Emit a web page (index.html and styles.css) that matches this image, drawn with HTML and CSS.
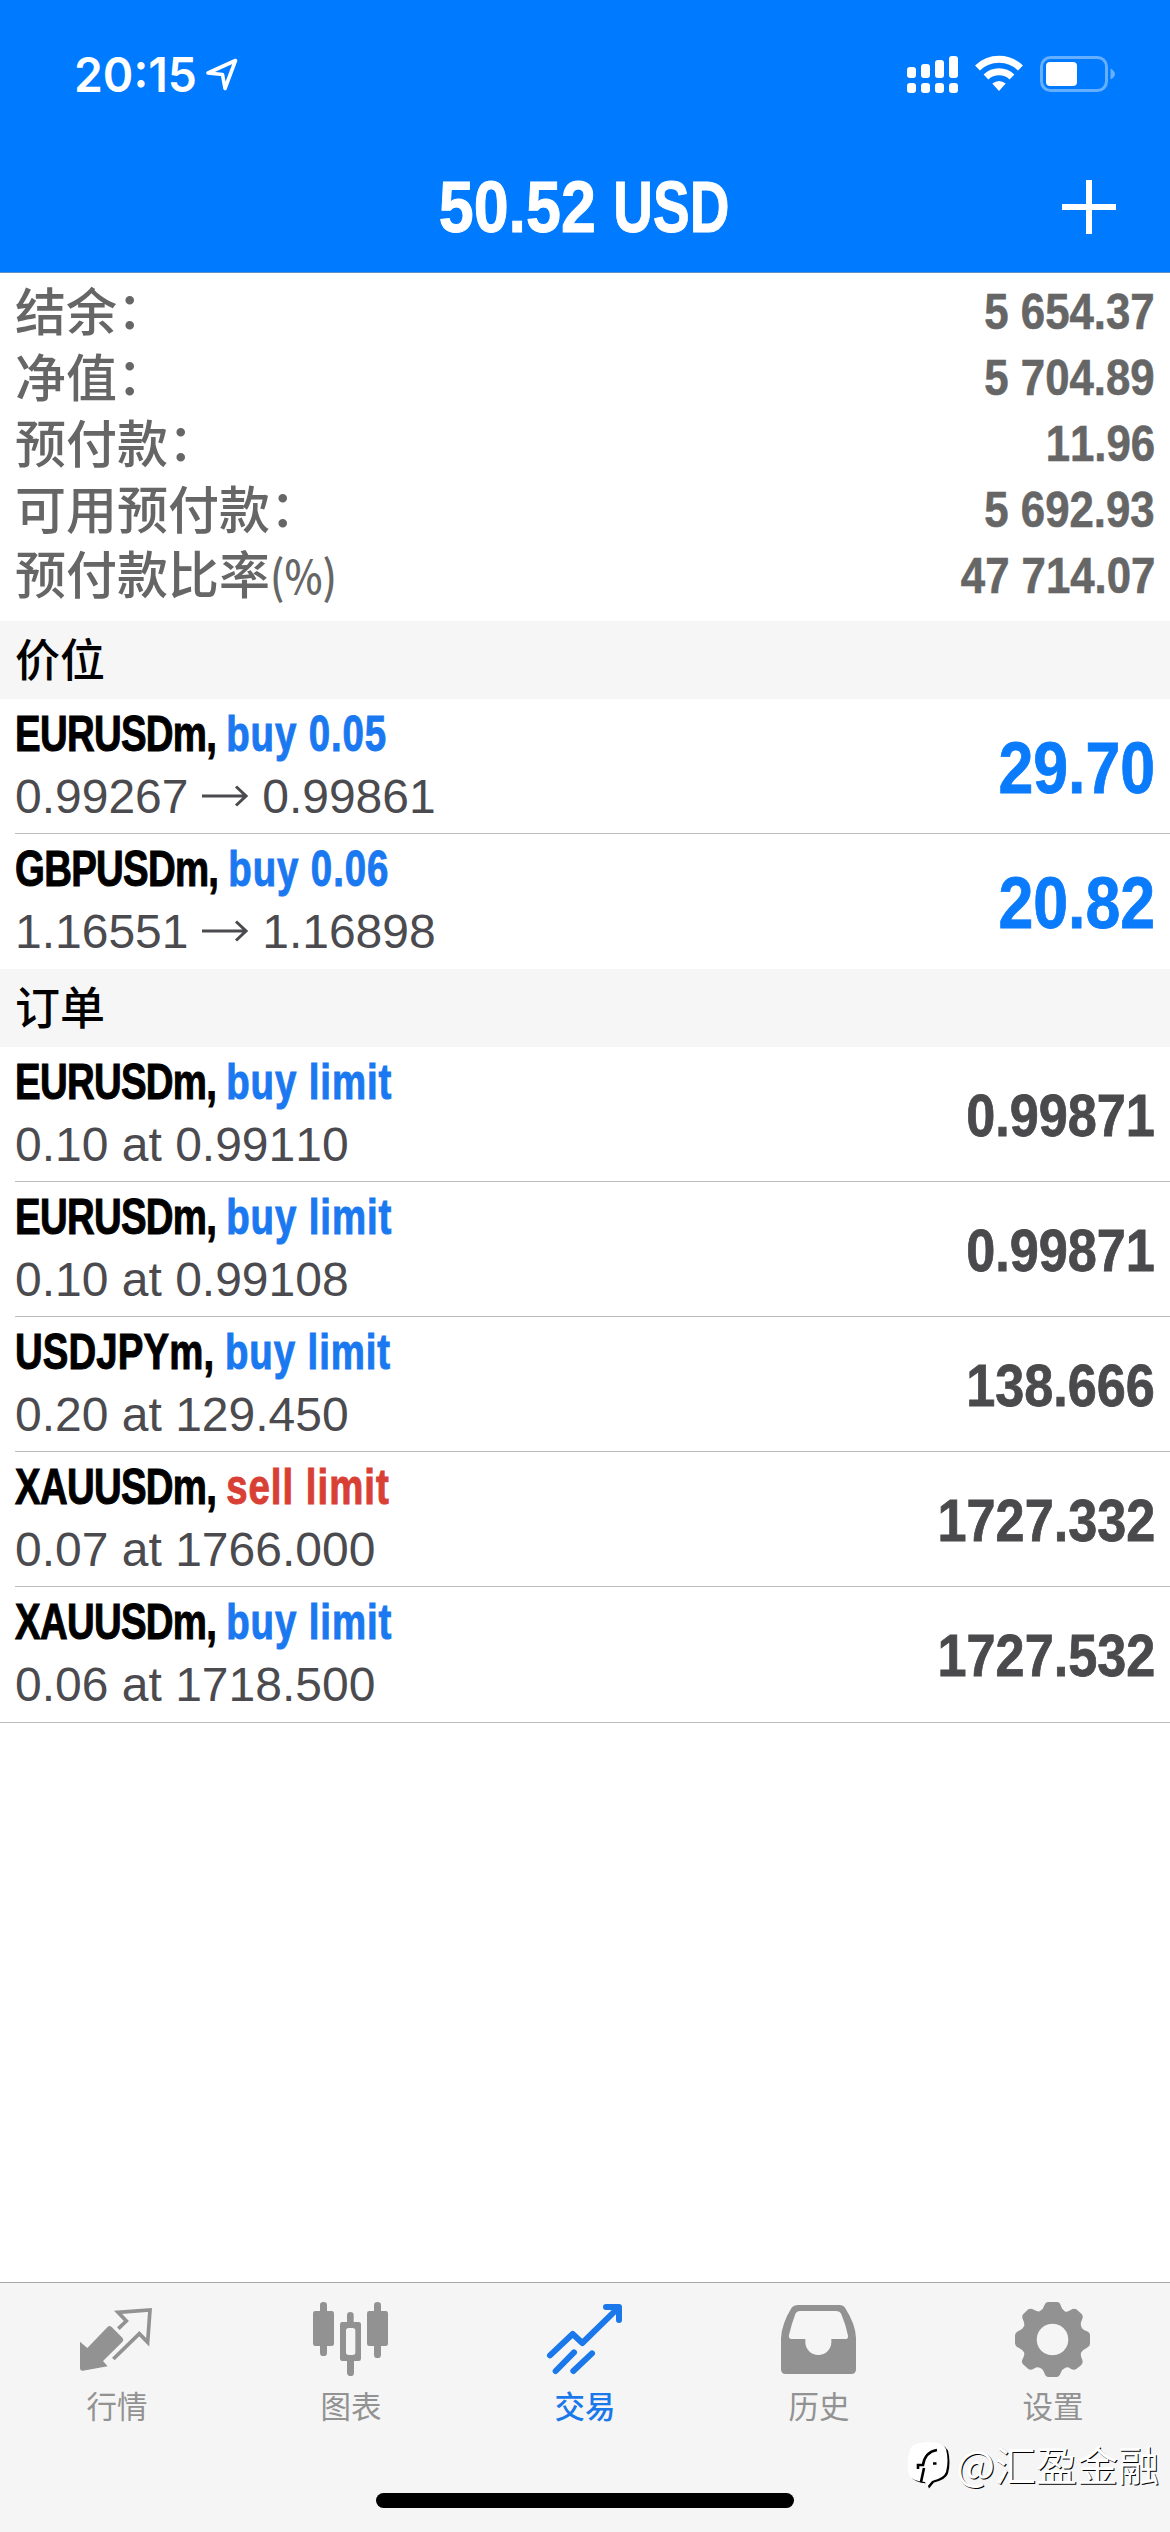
FILE: index.html
```html
<!DOCTYPE html>
<html lang="zh-CN">
<head>
<meta charset="utf-8">
<title>交易</title>
<link rel="stylesheet" href="styles.css">
</head>
<body>
<div class="app">
  <header class="header">
    <div class="status">
      <div class="status-left">
        <span class="clock">20:15</span>
        <svg class="location" width="36" height="36" viewBox="0 0 36 36"><path d="M5 17 32.500 4.500 22 32.500 19.500 18.500Z" fill="none" stroke="#fff" stroke-width="3.600" stroke-linejoin="round"/></svg>
      </div>
      <svg class="status-icons" width="210" height="40" viewBox="906 54 210 40" fill="#fff">
        <rect x="907" y="67" width="9" height="11" rx="3"/><rect x="921" y="64" width="9" height="14" rx="3"/><rect x="935" y="60" width="9" height="18" rx="3"/><rect x="949" y="56" width="9" height="22" rx="3"/>
        <rect x="907" y="83" width="9" height="10" rx="3"/><rect x="921" y="83" width="9" height="10" rx="3"/><rect x="935" y="83" width="9" height="10" rx="3"/><rect x="949" y="83" width="9" height="10" rx="3"/>
        <g fill="none" stroke="#fff" stroke-width="7"><path d="M977.500 68A31 31 0 0 1 1020.500 68"/><path d="M986 77A19 19 0 0 1 1012 77"/></g>
        <path d="M992.300 83.500Q999 78.500 1005.700 83.500L999 91Z"/>
        <rect x="1041.500" y="57.500" width="65" height="33" rx="9" fill="none" stroke="#66afff" stroke-width="3"/>
        <path d="M1110.500 68.500Q1115 71 1115 74T1110.500 79.500Z" fill="#66afff"/>
        <rect x="1046" y="62" width="31" height="24" rx="4"/>
      </svg>
    </div>
    <div class="nav">
      <h1 class="nav-title"><span class="narrow">50.52 <span class="currency">USD</span></span></h1>
      <svg class="add" width="54" height="54" viewBox="0 0 54 54"><path d="M27 0V54M0 27H54" stroke="#fff" stroke-width="6"/></svg>
    </div>
  </header>

  <main class="content">
    <dl class="summary">
      <div class="summary-row"><dt>结余<span class="colon">：</span></dt><dd>5 654.37</dd></div>
      <div class="summary-row"><dt>净值<span class="colon">：</span></dt><dd>5 704.89</dd></div>
      <div class="summary-row"><dt>预付款<span class="colon">：</span></dt><dd>11.96</dd></div>
      <div class="summary-row"><dt>可用预付款<span class="colon">：</span></dt><dd>5 692.93</dd></div>
      <div class="summary-row"><dt>预付款比率<span class="unit">(%)</span></dt><dd>47 714.07</dd></div>
    </dl>

    <h2 class="section">价位</h2>
    <ul class="list">
      <li class="row"><div class="info"><div class="symbol"><span class="name">EURUSDm, </span><span class="buy">buy 0.05</span></div><div class="detail">0.99267 <svg class="arrow" width="46" height="22" viewBox="0 0 46 22"><path d="M0 11H44M34 1.500 44 11 34 20.500"/></svg> 0.99861</div></div><div class="profit">29.70</div></li>
      <li class="row"><div class="info"><div class="symbol"><span class="name">GBPUSDm, </span><span class="buy">buy 0.06</span></div><div class="detail">1.16551 <svg class="arrow" width="46" height="22" viewBox="0 0 46 22"><path d="M0 11H44M34 1.500 44 11 34 20.500"/></svg> 1.16898</div></div><div class="profit">20.82</div></li>
    </ul>

    <h2 class="section">订单</h2>
    <ul class="list orders">
      <li class="row"><div class="info"><div class="symbol"><span class="name">EURUSDm, </span><span class="buy">buy limit</span></div><div class="detail">0.10 at 0.99110</div></div><div class="price">0.99871</div></li>
      <li class="row"><div class="info"><div class="symbol"><span class="name">EURUSDm, </span><span class="buy">buy limit</span></div><div class="detail">0.10 at 0.99108</div></div><div class="price">0.99871</div></li>
      <li class="row"><div class="info"><div class="symbol"><span class="name loose">USDJPYm, </span><span class="buy">buy limit</span></div><div class="detail">0.20 at 129.450</div></div><div class="price">138.666</div></li>
      <li class="row"><div class="info"><div class="symbol"><span class="name">XAUUSDm, </span><span class="sell">sell limit</span></div><div class="detail">0.07 at 1766.000</div></div><div class="price">1727.332</div></li>
      <li class="row"><div class="info"><div class="symbol"><span class="name">XAUUSDm, </span><span class="buy">buy limit</span></div><div class="detail">0.06 at 1718.500</div></div><div class="price">1727.532</div></li>
    </ul>
  </main>

  <footer class="footer">
    <nav class="tabs">
      <a class="tab"><svg class="tab-icon" viewBox="231 120 240 240"><path fill="currentColor" d="M240 245 262 264 322 202Q328 195 335 201L367 233Q373 240 366 247L309 303 323 319 248 332Q240 333 240 325Z"/><path fill="none" stroke="currentColor" stroke-width="11" d="M355 206 379 183 354 157 450 150 443 247 418 221 340 297"/></svg><span>行情</span></a>
      <a class="tab"><svg class="tab-icon" viewBox="933 120 240 240" fill="currentColor"><rect x="939" y="153" width="63" height="105" rx="7"/><rect x="960" y="126" width="21" height="162" rx="10"/><rect x="1101" y="153" width="63" height="105" rx="7"/><rect x="1122" y="126" width="21" height="168" rx="10"/><path fill-rule="evenodd" d="M1041 186V166Q1041 156 1051 156T1061 166V186H1076Q1083 186 1083 193V296Q1083 303 1076 303H1062V338Q1062 348 1052 348T1041 338V303H1027Q1020 303 1020 296V193Q1020 186 1027 186ZM1046 204Q1038 204 1038 212V277Q1038 285 1046 285H1058Q1066 285 1066 277V212Q1066 204 1058 204Z"/></svg><span>图表</span></a>
      <a class="tab active"><svg class="tab-icon" viewBox="315 120 240 240" fill="none" stroke="currentColor" stroke-width="18" stroke-linecap="round" stroke-linejoin="round"><path d="M330 286 398 222 427 249 530 148M498 141H537V180M347 333 402 277M400 333 456 280"/></svg><span>交易</span></a>
      <a class="tab"><svg class="tab-icon" viewBox="117 120 240 240" fill="currentColor"><path fill-rule="evenodd" d="M175 135H298Q310 135 316 145Q347 194 348 234V328Q348 342 334 342H137Q123 342 123 328V234Q126 190 154 145Q161 135 175 135ZM180 153Q170 153 166 162Q155 191 147 225Q145 237 155 237H196V246A39 39 0 0 0 274 246V237H316Q325 237 324 227Q318 196 304 163Q299 153 288 153Z"/></svg><span>历史</span></a>
      <a class="tab"><svg class="tab-icon" viewBox="819 120 240 240" fill="currentColor"><path fill-rule="evenodd" d="M925 126H951Q960 126 963 139Q966 150 976 155Q982 157 993 149Q1002 144 1009 148L1025 162Q1031 169 1026 179Q1020 190 1024 200Q1027 209 1039 213Q1050 217 1050 225V252Q1050 259 1040 264Q1028 269 1024 277Q1020 284 1026 297Q1031 309 1023 316L1009 327Q1002 332 992 326Q984 320 976 323Q966 327 962 339Q958 351 950 351H925Q917 351 913 339Q909 326 899 323Q892 320 881 326Q872 332 865 327L849 313Q843 306 848 297Q855 284 852 277Q848 269 837 264Q825 259 825 250V226Q825 217 837 212Q849 207 852 199Q855 191 849 179Q844 168 850 162L865 148Q872 144 882 149Q892 156 899 154Q909 150 912 139Q916 126 925 126ZM937.500 191A47.500 47.500 0 1 0 937.600 191Z"/></svg><span>设置</span></a>
    </nav>
    <div class="home-indicator"></div>
    <div class="watermark">
      <svg width="46" height="50" viewBox="0 0 46 50"><path transform="translate(2 1.500)" d="M3 9Q4 2 21 1Q36 1 39 8Q42 20 39 31Q37 37 25 40L20 46 18 41Q5 40 2 34Q-1 21 3 9Z" fill="#000"/><path d="M3 9Q4 2 21 1Q36 1 39 8Q42 20 39 31Q37 37 25 40L20 46 18 41Q5 40 2 34Q-1 21 3 9Z" fill="#fff"/><path d="M14 41 17 27M11 28V24H16Q18 11 30 9M26 22.500H29.500" fill="none" stroke="#000" stroke-width="2.600"/></svg>
      <span>@汇盈金融</span>
    </div>
  </footer>
</div>
</body>
</html>
```
FILE: styles.css
```css
* { box-sizing: border-box; }

body {
  margin: 0;
  background: #fff;
  font-family: "Liberation Sans", "Noto Sans CJK SC", sans-serif;
  font-kerning: none;
}

h1, h2, dl, dd, ul { margin: 0; padding: 0; }
ul { list-style: none; }
svg { display: block; }

.app {
  width: 1170px;
  height: 2532px;
  display: flex;
  flex-direction: column;
}

.header {
  height: 273px;
  background: #007aff;
  border-bottom: 1px solid #5f8fc4;
  color: #fff;
}

.status {
  height: 148px;
  padding: 0 54px 0 74px;
  display: flex;
  align-items: center;
  justify-content: space-between;
}

.status-left { display: flex; align-items: center; }

.clock {
  width: 129px;
  padding-top: 1px;
  font: 600 48px/60px Inter, sans-serif;
  transform: scaleX(.965);
  transform-origin: left;
}

.nav {
  height: 116px;
  padding: 0 54px;
  display: grid;
  grid-template-columns: 54px 1fr 54px;
  align-items: center;
}

.nav-title {
  grid-column: 2;
  text-align: center;
  font-size: 73px;
  line-height: 118px;
}

.narrow {
  display: inline-block;
  transform: scaleX(.86);
  -webkit-text-stroke: 1px currentColor;
}

.currency {
  display: inline-block;
  margin-right: -18px;
  transform: scaleX(.875);
  transform-origin: left;
}

.content { flex: 1; }

.summary { height: 348px; padding: 6px 15px 0; }

.summary-row {
  height: 66px;
  display: flex;
  justify-content: space-between;
  align-items: center;
  color: #666;
}

.summary-row dt {
  padding-bottom: 6px;
  font: 500 51px/60px "Noto Sans CJK SC", sans-serif;
}

.colon { display: inline-block; transform: translateY(-2px); }

.unit {
  display: inline-block;
  font-size: 46px;
  transform: scaleX(.88);
  transform-origin: left;
}

.summary-row dd {
  font-size: 50px;
  font-weight: 700;
  transform: scaleX(.875);
  transform-origin: right;
  -webkit-text-stroke: .6px currentColor;
}

.section {
  height: 78px;
  padding-left: 15px;
  background: #f6f6f6;
  font: 500 45px/74px "Noto Sans CJK SC", sans-serif;
  color: #000;
}

.row {
  position: relative;
  height: 135px;
  padding: 0 15px;
  display: flex;
  align-items: center;
  justify-content: space-between;
}

.row::after {
  content: "";
  position: absolute;
  left: 15px;
  right: 0;
  bottom: 0;
  height: 1px;
  background: #bcbbc0;
}

.row:last-child::after { display: none; }
.orders .row:last-child::after { display: block; left: 0; bottom: -1px; }

.info { height: 129px; white-space: nowrap; }

.symbol {
  font-size: 49.500px;
  font-weight: 700;
  line-height: 63px;
  color: #000;
  transform: scaleX(.775);
  transform-origin: left;
  -webkit-text-stroke: 1px currentColor;
}

.name { letter-spacing: -.900px; }
.name.loose { letter-spacing: .150px; }
.buy { color: #1a78f0; letter-spacing: 1.200px; }
.sell { color: #d94035; letter-spacing: 1.300px; }

.detail {
  font-size: 48px;
  line-height: 63px;
  color: #4b4b4f;
}

.arrow {
  display: inline-block;
  margin-right: 1px;
  vertical-align: 6px;
  fill: none;
  stroke: #4b4b4f;
  stroke-width: 3;
}

.profit, .price {
  padding-top: 2px;
  font-weight: 700;
  transform: scaleX(.87);
  transform-origin: right;
  -webkit-text-stroke: .8px currentColor;
}

.profit { font-size: 72px; color: #0a7bfb; }
.price { font-size: 60px; color: #4a4a4d; }

.footer {
  position: relative;
  height: 250px;
  background: #f5f5f5;
  border-top: 1px solid #a8a8a8;
}

.tabs { display: grid; grid-template-columns: repeat(5, 1fr); }

.tab {
  padding-top: 17px;
  display: flex;
  flex-direction: column;
  align-items: center;
  color: #929292;
  font: 400 30.500px/44px "Noto Sans CJK SC", sans-serif;
}

.tab.active { color: #1a78ea; font-weight: 500; }
.tab-icon { width: 80px; height: 80px; margin-bottom: 3px; }

.home-indicator {
  width: 418px;
  height: 15px;
  margin: 66px auto 0;
  border-radius: 8px;
  background: #000;
}

.watermark {
  position: absolute;
  right: 11px;
  bottom: 35px;
  display: flex;
  align-items: center;
  gap: 3px;
  color: #fff;
  font: 400 41px/56px "Noto Sans CJK SC", sans-serif;
  text-shadow: 1px 1px 0 #000;
}

.watermark span { padding-bottom: 6px; }
```
